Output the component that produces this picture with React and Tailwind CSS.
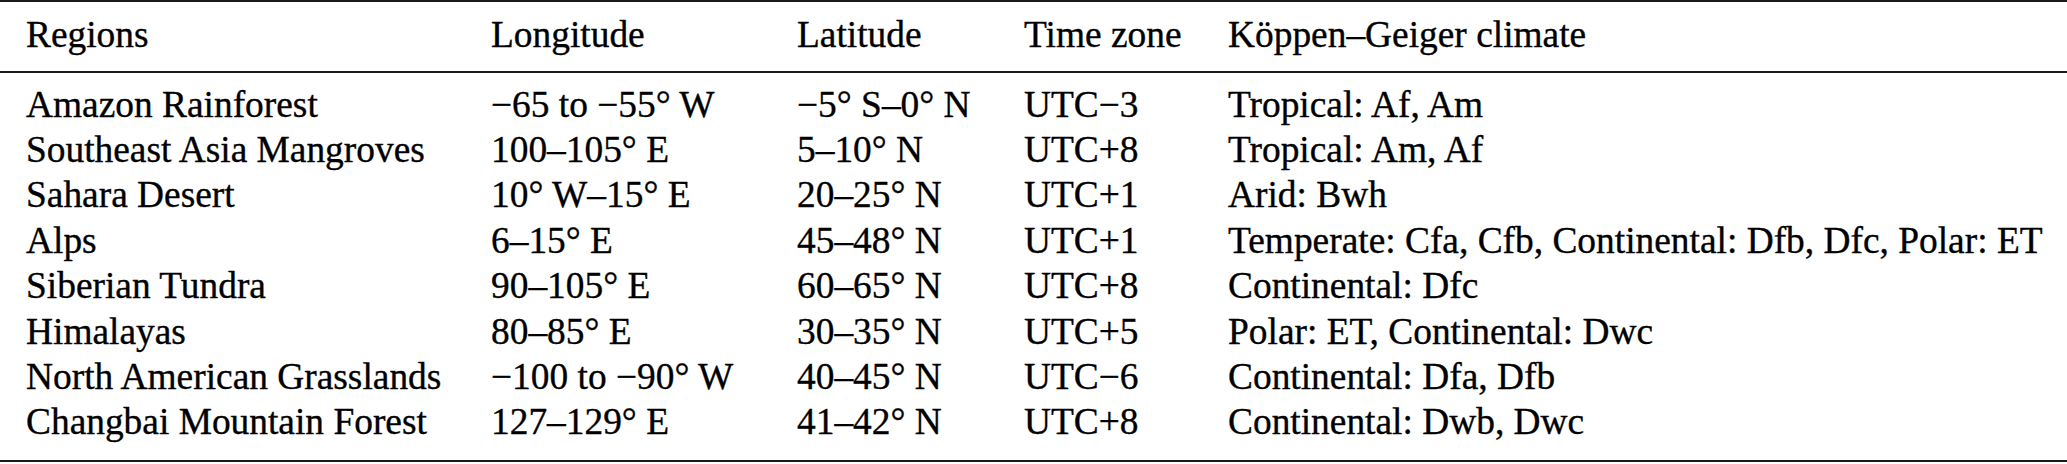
const rows = [
  ["Amazon Rainforest", "−65 to −55° W", "−5° S–0° N", "UTC−3", "Tropical: Af, Am"],
  ["Southeast Asia Mangroves", "100–105° E", "5–10° N", "UTC+8", "Tropical: Am, Af"],
  ["Sahara Desert", "10° W–15° E", "20–25° N", "UTC+1", "Arid: Bwh"],
  ["Alps", "6–15° E", "45–48° N", "UTC+1", "Temperate: Cfa, Cfb, Continental: Dfb, Dfc, Polar: ET"],
  ["Siberian Tundra", "90–105° E", "60–65° N", "UTC+8", "Continental: Dfc"],
  ["Himalayas", "80–85° E", "30–35° N", "UTC+5", "Polar: ET, Continental: Dwc"],
  ["North American Grasslands", "−100 to −90° W", "40–45° N", "UTC−6", "Continental: Dfa, Dfb"],
  ["Changbai Mountain Forest", "127–129° E", "41–42° N", "UTC+8", "Continental: Dwb, Dwc"],
];

const headers = ["Regions", "Longitude", "Latitude", "Time zone", "Köppen–Geiger climate"];

const cols = "grid grid-cols-[465px_306px_227px_204px_1fr] pl-[26px]";

export default function App() {
  return (
    <div className="w-[2067px] h-[464px] bg-white text-black [font-family:Liberation_Serif,Times_New_Roman,serif] text-[37.4px] leading-[45.4px] [-webkit-text-stroke:0.35px_black] whitespace-nowrap">
      <div className="h-[2px] bg-[#1a1a1a]" />
      <div className={`${cols} pt-[10px] pb-[13.6px]`}>
        {headers.map((h) => (
          <div key={h}>{h}</div>
        ))}
      </div>
      <div className="h-[1.5px] bg-[#1a1a1a]" />
      <div className="pt-[9px] pb-[14.8px]">
        {rows.map((r, i) => (
          <div key={i} className={cols}>
            {r.map((c, j) => (
              <div key={j}>{c}</div>
            ))}
          </div>
        ))}
      </div>
      <div className="h-[2px] bg-[#1a1a1a]" />
    </div>
  );
}
